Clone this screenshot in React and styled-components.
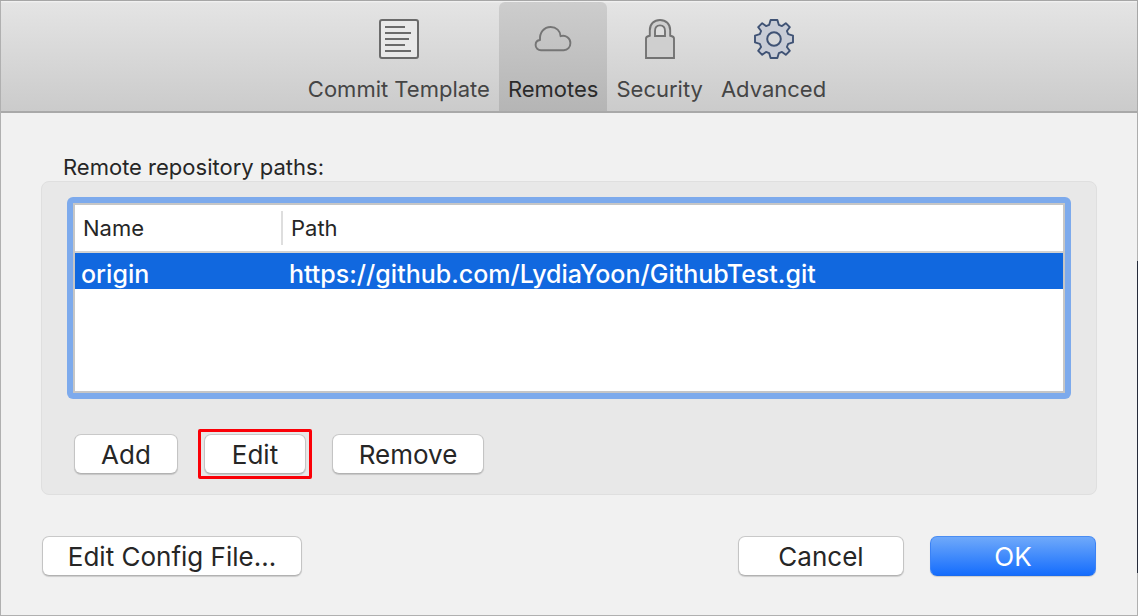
import React, { useState } from "react";
import styled, { createGlobalStyle } from "styled-components";

const GlobalStyle = createGlobalStyle`
  * {
    box-sizing: border-box;
  }

  body {
    margin: 0;
    font-family: Inter, "Liberation Sans", sans-serif;
    color: #262626;
  }
`;

const Shell = styled.div`
  min-height: 100vh;
  padding: 1px;
  display: flex;
  background: linear-gradient(
    #a6a6a6 0,
    #b4b4b4 261px,
    #252b3a 261px,
    #252b3a 573px,
    #b0b0b0 573px
  );
`;

const Dialog = styled.div`
  flex: 1;
  background-color: #f1f1f1;
  box-shadow: -1px 0 0 #b0b0b0, 0 1px 0 #b0b0b0;
`;

const Toolbar = styled.nav`
  height: 112px;
  padding: 1px 4px 0 0;
  display: flex;
  justify-content: center;
  background: linear-gradient(#f4f4f4 0, #e4e4e4 2px, #cbcbcb 100%);
  border-bottom: 2px solid #a9a9a9;
`;

const Tab = styled.button`
  height: 109px;
  padding: 17px 9px 0 9px;
  display: flex;
  flex-direction: column;
  align-items: center;
  gap: 16px;
  border: 0;
  border-radius: 6px 6px 0 0;
  background: ${(props) =>
    props.$active ? "linear-gradient(#cdcdcd, #b5b5b5)" : "transparent"};
  color: ${(props) => (props.$active ? "#2b2b2b" : "#454545")};
  font-family: inherit;
  font-size: 22px;
  line-height: 28px;
  white-space: nowrap;
`;

const Content = styled.main`
  padding: 40px 40px 38px 40px;
`;

const GroupLabel = styled.h2`
  margin: 0;
  padding-left: 22px;
  font-size: 22px;
  line-height: 28px;
  font-weight: 400;
`;

const GroupBox = styled.section`
  padding: 15px 25px 20px 25px;
  background-color: #e8e8e8;
  border: 1px solid #dfdfdf;
  border-radius: 8px;
`;

const FocusRing = styled.div`
  padding: 6px;
  border-radius: 6px;
  background-color: #7daaec;
`;

const TableField = styled.div`
  height: 190px;
  background-color: #ffffff;
  border: 2px solid #c6c6c6;
`;

const Table = styled.table`
  width: 100%;
  border-collapse: separate;
  border-spacing: 0;
  table-layout: fixed;
  text-align: left;
`;

const HeadCell = styled.th`
  width: ${(props) => props.$width || "auto"};
  height: 48px;
  padding: 0;
  border-bottom: 2px solid #d2d2d2;
  font-size: 22px;
  line-height: 34px;
  font-weight: 400;
`;

const HeadLabel = styled.div`
  padding-left: 8px;
  border-right: ${(props) => (props.$divided ? "2px solid #dedede" : "0")};
`;

const Row = styled.tr`
  background-color: #1168df;
  color: #ffffff;
`;

const Cell = styled.td`
  height: 36px;
  padding: 6px 0 0 6px;
  font-size: 25px;
  line-height: 30px;
  font-weight: 500;
`;

const Actions = styled.div`
  margin-top: 35px;
  padding-left: 7px;
  display: flex;
  gap: 26px;
`;

const Button = styled.button`
  width: ${(props) => props.$width};
  height: 40px;
  padding: 2px 0 0 0;
  border: 1px solid;
  border-color: ${(props) =>
    props.$primary ? "#4a8df3 #3b82f5 #1a6bee" : "#c9c9c9 #c4c4c4 #b2b2b2"};
  border-radius: 7px;
  background: ${(props) =>
    props.$primary ? "linear-gradient(#6fa9fa, #156dfd)" : "#ffffff"};
  box-shadow: 0 1px 1px rgba(0, 0, 0, 0.15);
  color: ${(props) => (props.$primary ? "#ffffff" : "#262626")};
  font-family: inherit;
  font-size: 26px;
  line-height: 36px;
  white-space: nowrap;
`;

const Marked = styled.div`
  position: relative;
  display: flex;

  &::after {
    content: "";
    position: absolute;
    inset: -5px -6px;
    border: 3px solid #fb0007;
    border-radius: 2px;
    pointer-events: none;
  }
`;

const Footer = styled.footer`
  margin-top: 41px;
  padding: 0 1px;
  display: flex;
  gap: 26px;
`;

const Spacer = styled.div`
  flex: 1;
`;

const TemplateIcon = () => (
  <svg width="40" height="40" viewBox="0 0 40 40" fill="none" stroke="#6b6b6b">
    <rect x="1" y="1" width="38" height="38" rx="2" fill="#e9e9e9" strokeWidth="2" />
    <path d="M6 8h20M6 14h26M6 20h24M6 26h20M6 32h26" strokeWidth="2" />
  </svg>
);

const CloudIcon = () => (
  <svg width="40" height="40" viewBox="0 0 40 40" fill="none" stroke="#757575">
    <path
      d="M8 31.2C5 31.2 2.6 29 2.6 26C2.6 23.4 4.4 21.3 7 21C6.4 13.5 11.1 8 17.6 8C23.3 8 27.4 12 27.6 17.2C32.8 15.6 37.4 19.4 37.4 24C37.4 28.2 34.6 31.2 30.8 31.2Z"
      strokeWidth="1.9"
      strokeLinejoin="round"
    />
  </svg>
);

const LockIcon = () => (
  <svg width="40" height="40" viewBox="0 0 40 40" fill="#cfcfcf" stroke="#737373">
    <path
      fillRule="evenodd"
      d="M6 39V19.5Q6 17.5 9.8 16.8V11.2C9.8 5 14 1 20 1C26 1 30.2 5 30.2 11.2V16.8Q34 17.5 34 19.5V39ZM15 17H25V12C25 8.6 23.2 6.4 20 6.4C16.8 6.4 15 8.6 15 12Z"
      strokeWidth="1.9"
    />
  </svg>
);

const GearIcon = () => (
  <svg width="40" height="40" viewBox="0 0 40 40" fill="#c8ccd6" stroke="#3f5274">
    <path
      d="M16.6 1H23.4L24.8 5.8L28 7.1L31.8 4.2L35.8 8.2L32.9 12L34.2 15.2L39 16.6V23.4L34.2 24.8L32.9 28L35.8 31.8L31.8 35.8L28 32.9L24.8 34.2L23.4 39H16.6L15.2 34.2L12 32.9L8.2 35.8L4.2 31.8L7.1 28L5.8 24.8L1 23.4V16.6L5.8 15.2L7.1 12L4.2 8.2L8.2 4.2L12 7.1L15.2 5.8Z"
      strokeWidth="1.9"
      strokeLinejoin="round"
    />
    <circle cx="20" cy="20" r="6.8" fill="#d7d8da" strokeWidth="2" />
  </svg>
);

const tabs = [
  { name: "Commit Template", icon: <TemplateIcon /> },
  { name: "Remotes", icon: <CloudIcon /> },
  { name: "Security", icon: <LockIcon /> },
  { name: "Advanced", icon: <GearIcon /> },
];

const remotes = [
  { name: "origin", path: "https://github.com/LydiaYoon/GithubTest.git" },
];

const App = () => {
  const [active, setActive] = useState("Remotes");

  return (
    <Shell>
      <GlobalStyle />
      <Dialog>
        <Toolbar>
          {tabs.map((tab) => (
            <Tab
              key={tab.name}
              type="button"
              $active={tab.name === active}
              onClick={() => setActive(tab.name)}
            >
              {tab.icon}
              {tab.name}
            </Tab>
          ))}
        </Toolbar>
        <Content>
          <GroupLabel id="remotes-label">Remote repository paths:</GroupLabel>
          <GroupBox>
            <FocusRing>
              <TableField>
                <Table aria-labelledby="remotes-label">
                  <thead>
                    <tr>
                      <HeadCell $width="208px">
                        <HeadLabel $divided>Name</HeadLabel>
                      </HeadCell>
                      <HeadCell>
                        <HeadLabel>Path</HeadLabel>
                      </HeadCell>
                    </tr>
                  </thead>
                  <tbody>
                    {remotes.map((remote) => (
                      <Row key={remote.name}>
                        <Cell>{remote.name}</Cell>
                        <Cell>{remote.path}</Cell>
                      </Row>
                    ))}
                  </tbody>
                </Table>
              </TableField>
            </FocusRing>
            <Actions>
              <Button type="button" $width="104px">Add</Button>
              <Marked>
                <Button type="button" $width="102px">Edit</Button>
              </Marked>
              <Button type="button" $width="152px">Remove</Button>
            </Actions>
          </GroupBox>
          <Footer>
            <Button type="button" $width="260px">Edit Config File...</Button>
            <Spacer />
            <Button type="button" $width="166px">Cancel</Button>
            <Button type="button" $width="166px" $primary>OK</Button>
          </Footer>
        </Content>
      </Dialog>
    </Shell>
  );
};

export default App;
